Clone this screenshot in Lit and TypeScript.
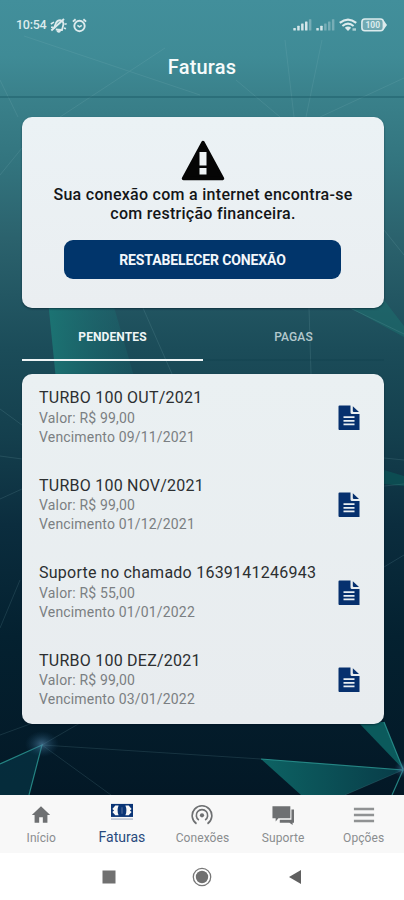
import { LitElement, html, svg, css } from "lit";
import { customElement } from "lit/decorators.js";
import { classMap } from "lit/directives/class-map.js";

interface Invoice {
  title: string;
  value: string;
  due: string;
}

const invoices: Invoice[] = [
  { title: "TURBO 100 OUT/2021", value: "R$ 99,00", due: "09/11/2021" },
  { title: "TURBO 100 NOV/2021", value: "R$ 99,00", due: "01/12/2021" },
  { title: "Suporte no chamado 1639141246943", value: "R$ 55,00", due: "01/01/2022" },
  { title: "TURBO 100 DEZ/2021", value: "R$ 99,00", due: "03/01/2022" },
];

const navItems = [
  {
    label: "Início",
    icon: svg`<path d="M10 20.500v-6h4v6h5v-8.500h3L12 2.500 2 12h3v8.500z" fill="currentColor"/>`,
  },
  {
    label: "Faturas",
    icon: svg`<rect x="0" y="1" width="24" height="14.200" fill="currentColor"/>
      <path d="M1.500 6.500L4.700 2.800H8.300Q6 8.100 8.300 13.400H4.700L1.500 9.700L3.400 8.100zM22.500 6.500L19.300 2.800H15.700Q18 8.100 15.700 13.400H19.300L22.500 9.700L20.600 8.100z" fill="#f8f8f8"/>
      <path d="M12 4.600v7" stroke="#4c6896" stroke-width="1.300"/>
      <rect x="0" y="16.800" width="24" height="1.500" fill="#b2bccd"/>`,
  },
  {
    label: "Conexões",
    icon: svg`<g fill="none" stroke="currentColor" stroke-width="1.800">
      <path d="M6 21.500a10.700 10.700 0 1 1 12 0"/><path d="M8.600 17.500a6.200 6.200 0 1 1 6.800 0"/></g>
      <circle cx="12" cy="12.300" r="2.300" fill="currentColor"/>`,
  },
  {
    label: "Suporte",
    icon: svg`<path d="M0.500 2.500h19.500v13H7l-3 3.500V15.500H0.500zM21.200 6H24v14.500h-1.500V23l-3.500-2.500H8.500V17.200h12.700z" fill="currentColor"/>`,
  },
  {
    label: "Opções",
    icon: svg`<path d="M1 5.500h22M1 12h22M1 18.500h22" stroke="currentColor" stroke-width="2.600" opacity=".75"/>`,
  },
];

@customElement("app-backdrop")
export class AppBackdrop extends LitElement {
  static styles = css`
    :host {
      display: block;
    }
    .art {
      display: block;
      width: 100%;
      height: 100%;
    }
  `;

  render() {
    return html`<svg class="art" viewBox="0 0 404 795" preserveAspectRatio="none">
      <defs>
        <linearGradient id="sky" x1="0" y1="0" x2="0" y2="1">
          <stop offset="0" stop-color="#428f9b" />
          <stop offset="0.07" stop-color="#3f8b96" />
          <stop offset="0.12" stop-color="#3a818b" />
          <stop offset="0.2" stop-color="#33757f" />
          <stop offset="0.3" stop-color="#2b626d" />
          <stop offset="0.44" stop-color="#1b4c59" />
          <stop offset="0.55" stop-color="#143f4d" />
          <stop offset="0.66" stop-color="#0b2d3e" />
          <stop offset="0.8" stop-color="#042130" />
          <stop offset="1" stop-color="#031826" />
        </linearGradient>
        <linearGradient id="shard" x1="0" y1="0" x2="1" y2="0">
          <stop offset="0" stop-color="#1b7775" stop-opacity="0.9" />
          <stop offset="1" stop-color="#1b6a70" stop-opacity="0.25" />
        </linearGradient>
        <linearGradient id="facet" x1="0" y1="0" x2="1" y2="0">
          <stop offset="0" stop-color="#0d6263" />
          <stop offset="1" stop-color="#083c48" />
        </linearGradient>
        <radialGradient id="glow">
          <stop offset="0" stop-color="#5b8fb4" stop-opacity="0.6" />
          <stop offset="1" stop-color="#1a4a6a" stop-opacity="0" />
        </radialGradient>
      </defs>
      <rect width="404" height="795" fill="url(#sky)" />
      <path d="M48 300L56 380H135L112 300z" fill="url(#shard)" />
      <path d="M350 308L384 300L404 326V337z" fill="#1c716f" opacity="0.5" />
      <path d="M384 470L404 476V486L384 484z" fill="#0c5557" opacity="0.7" />
      <path d="M358 722H384L403 769z" fill="#0b5a5c" />
      <path d="M261 759L403 770L345 795H301z" fill="url(#facet)" />
      <path d="M0 764L42 745L29 795H0z" fill="#073544" opacity="0.7" />
      <g fill="none" stroke="#8fc0c6" stroke-width="1" opacity="0.15">
        <path d="M24 36L200 95M60 117L165 48M0 175L22 148M0 80L18 117M404 78L320 117M285 40L294 117M322 40L306 117M236 80L280 117" />
        <path d="M143 308L172 374M309 308L311 374M384 230L404 255M0 409L22 425M0 456L22 459M0 499L22 489" />
        <path d="M350 308L404 334M384 458L404 460M384 486L404 484M384 567L404 555M20 580L0 628M0 735L30 724M42 745L80 723M42 745L261 759M42 745L111 795M345 795L403 770" />
      </g>
      <g fill="none" stroke="#2a9490" stroke-width="1.200" opacity="0.85">
        <path d="M0 764L42 745L29 795M261 759L403 770L392 795M384 722L403 769" />
      </g>
      <ellipse cx="42" cy="744" rx="17" ry="13" fill="url(#glow)" />
      <ellipse cx="403" cy="769" rx="9" ry="9" fill="url(#glow)" />
    </svg>`;
  }
}

@customElement("status-bar")
export class StatusBar extends LitElement {
  static styles = css`
    :host {
      display: flex;
      align-items: center;
      height: 50px;
      padding: 0 17px 0 16px;
      box-sizing: border-box;
      color: #dcebed;
      font: 500 12.500px/16px Roboto, sans-serif;
    }
    .time {
      width: 34px;
      letter-spacing: -0.25px;
    }
    .left {
      display: flex;
      gap: 5px;
      flex: 1;
      align-items: center;
    }
    .right {
      display: flex;
      align-items: center;
    }
    .icon {
      display: block;
    }
    .signal {
      margin-right: 4px;
    }
    .wifi {
      margin-right: 4px;
    }
  `;

  private bars(lit: number) {
    return svg`${[0, 1, 2, 3, 4].map(
      (i) => svg`<rect x=${i * 3.9 + 0.3} y=${9 - i * 2.2} width="2.500" height=${2.6 + i * 2.2}
        rx="0.5" fill="currentColor" opacity=${i < lit ? 0.95 : 0.35} />`,
    )}`;
  }

  render() {
    return html`
      <span class="time">10:54</span>
      <div class="left">
        <svg class="icon" width="17" height="15" viewBox="0 0 17 15" fill="none" stroke="currentColor">
          <path d="M3.800 10.300L6 5Q7.500 2 10.800 2.300Q14.200 3.500 13.200 7.200L12 12L5.800 11.500M7.200 12.800Q8.500 14.600 10.300 13" stroke-width="1.800" />
          <path d="M1.300 12.500L14 1" stroke-width="2" />
          <path d="M0.800 6L4 4.200M14.500 6.300L16.700 5.800M14 10L16 10.800M1 9.200H3" stroke-width="1.500" />
        </svg>
        <svg class="icon" width="15" height="15" viewBox="0 0 15 15" fill="none" stroke="currentColor">
          <circle cx="7.500" cy="8" r="5.200" stroke-width="1.900" />
          <path d="M0.900 3.600L3.600 1.300M14.100 3.600L11.400 1.300" stroke-width="1.900" />
          <path d="M5.400 7.300L7.500 8.800L9.800 7.300" stroke-width="1.600" />
        </svg>
      </div>
      <div class="right">
        <svg class="icon signal" width="19" height="12" viewBox="0 0 19 12">${this.bars(4)}</svg>
        <svg class="icon signal" width="19" height="12" viewBox="0 0 19 12">${this.bars(2)}</svg>
        <svg class="icon wifi" width="18" height="14" viewBox="0 0 18 14" fill="none" stroke="currentColor">
          <path d="M0.800 4.900Q9 -1.800 17.200 4.900" stroke-width="2.200" />
          <path d="M3.400 8Q9 3.300 14.600 8" stroke-width="2" />
          <path d="M5.800 9.800Q9 7.200 12.200 9.800L9 13z" fill="currentColor" stroke="none" />
          <path d="M13.500 11.500H17" stroke-width="2.400" opacity="0.7" />
        </svg>
        <svg class="icon" width="26" height="14" viewBox="0 0 26 14">
          <rect x="0.900" y="1" width="21.500" height="11.800" rx="3" fill="#ffffff" fill-opacity="0.25" stroke="currentColor" stroke-width="1.600" />
          <path d="M22.800 2.500L26 7L22.800 11.500z" fill="currentColor" />
          <text x="11.800" y="10.200" text-anchor="middle" font-family="Roboto, sans-serif" font-size="8.500" font-weight="700" fill="currentColor">100</text>
        </svg>
      </div>
    `;
  }
}

@customElement("invoice-row")
export class InvoiceRow extends LitElement {
  static properties = { invoice: { attribute: false } };
  declare invoice: Invoice;

  static styles = css`
    :host {
      display: flex;
      align-items: flex-start;
      justify-content: space-between;
      box-sizing: border-box;
      height: 87.500px;
      padding: 13px 24px 0 17px;
      font-family: Roboto, sans-serif;
    }
    .title {
      color: #2c2f31;
      font-size: 16px;
      line-height: 21px;
      letter-spacing: 0.24px;
      white-space: nowrap;
      margin-bottom: 0.600px;
    }
    .detail {
      color: #7b7f82;
      font-size: 14px;
      line-height: 19px;
      letter-spacing: 0.17px;
    }
    .doc {
      display: block;
      margin-top: 17.500px;
    }
  `;

  render() {
    return html`
      <div>
        <div class="title">${this.invoice.title}</div>
        <div class="detail">Valor: ${this.invoice.value}</div>
        <div class="detail">Vencimento ${this.invoice.due}</div>
      </div>
      <svg class="doc" width="22" height="26" viewBox="0 0 22 26">
        <path d="M1.500 0.500H12.500V7.500Q12.500 9 14 9H21.500V25H1.500Q0.500 25 0.500 24V1.500Q0.500 0.500 1.500 0.500z" fill="#06306e" />
        <path d="M14.800 1.200L21 6.900H15.600Q14.800 6.900 14.800 6.100z" fill="#06306e" />
        <path d="M5.500 12.200H16.500M5.500 15.800H16.500M5.500 19.400H16.500" stroke="#e9eef2" stroke-width="1.700" />
      </svg>
    `;
  }
}

@customElement("app-root")
export class AppRoot extends LitElement {
  static styles = css`
    :host {
      display: block;
      position: relative;
      width: 404px;
      height: 900px;
      overflow: hidden;
      background: #ffffff;
      font-family: Roboto, sans-serif;
    }
    .backdrop {
      position: absolute;
      inset: 0 0 105px 0;
    }
    .screen {
      position: relative;
      display: flex;
      flex-direction: column;
      height: 100%;
    }
    .header {
      height: 98px;
      box-sizing: border-box;
      border-bottom: 2px solid rgba(22, 84, 98, 0.4);
    }
    .heading {
      margin: 0;
      padding-top: 4px;
      color: #f6fbfb;
      font-size: 20px;
      line-height: 26px;
      font-weight: 500;
      text-align: center;
      letter-spacing: 0.2px;
    }
    .content {
      flex: 1;
      padding: 19px 20px 0 22px;
    }
    .card {
      border-radius: 10px;
      background: linear-gradient(#ebf2f5, #eaeef1);
      box-shadow: 0 1px 2px rgba(0, 20, 35, 0.55);
    }
    .alert {
      display: flex;
      flex-direction: column;
      align-items: center;
      height: 190.500px;
      padding-top: 23px;
      box-sizing: border-box;
    }
    .message {
      margin: 4px 0 0;
      color: #141618;
      font-size: 16px;
      line-height: 19px;
      font-weight: 500;
      letter-spacing: 0.28px;
      text-align: center;
      white-space: nowrap;
    }
    .reconnect {
      width: 277px;
      height: 39px;
      margin: 17px 1px 0 0;
      padding: 0;
      border: 0;
      border-radius: 9px;
      background: #01356b;
      color: #f3f7fb;
      font: 700 14px/38px Roboto, sans-serif;
      letter-spacing: -0.12px;
    }
    .tabs {
      display: grid;
      grid-template-columns: 1fr 1fr;
      height: 53.500px;
      margin-bottom: 13px;
    }
    .tab {
      box-sizing: border-box;
      padding-top: 20.500px;
      border-bottom: 2px solid rgba(10, 60, 72, 0.25);
      color: #b4c9cd;
      font-size: 12px;
      line-height: 18px;
      font-weight: 500;
      letter-spacing: 0.1px;
      text-align: center;
    }
    .tab.active {
      border-bottom-color: #eef4f5;
      color: #eff6f7;
      font-weight: 700;
    }
    .list {
      height: 349.500px;
      background: linear-gradient(#eaf0f2, #e8ecef);
      overflow: hidden;
    }
    .nav {
      display: grid;
      grid-template-columns: repeat(5, 1fr);
      height: 58px;
      padding-left: 1px;
      box-sizing: border-box;
      background: #f8f8f8;
      color: #707274;
    }
    .item {
      display: flex;
      flex-direction: column;
      align-items: center;
      padding-top: 8.500px;
      gap: 3px;
      color: #6e7072;
      font-size: 12px;
      line-height: 18px;
      letter-spacing: 0.1px;
    }
    .item .label {
      color: #8a8d8f;
    }
    .item.active {
      padding-top: 8px;
      color: #0a3577;
      font-size: 14px;
      letter-spacing: 0;
    }
    .item.active .label {
      color: #284a7d;
    }
    .glyph {
      display: block;
    }
    .system {
      display: grid;
      grid-template-columns: 1fr 1fr 1fr;
      height: 47px;
      padding: 0 62px;
      box-sizing: border-box;
      justify-items: center;
      align-items: center;
    }
  `;

  render() {
    return html`
      <app-backdrop class="backdrop"></app-backdrop>
      <div class="screen">
        <header class="header">
          <status-bar></status-bar>
          <h1 class="heading">Faturas</h1>
        </header>
        <main class="content">
          <section class="card alert">
            <svg class="glyph" width="44" height="41" viewBox="0 0 44 41">
              <path d="M22 2.500L41.500 38.500H2.500z" fill="#050505" stroke="#050505" stroke-width="3.500" stroke-linejoin="round" />
              <path d="M18.500 12H25.500V25.500H18.500zM18.500 28H25.500V34.500H18.500z" fill="#eef3f5" />
            </svg>
            <p class="message">Sua conexão com a internet encontra-se<br />com restrição financeira.</p>
            <button class="reconnect">RESTABELECER CONEXÃO</button>
          </section>
          <div class="tabs">
            <div class="tab active">PENDENTES</div>
            <div class="tab">PAGAS</div>
          </div>
          <section class="card list">
            ${invoices.map((invoice) => html`<invoice-row .invoice=${invoice}></invoice-row>`)}
          </section>
        </main>
        <nav class="nav">
          ${navItems.map(
            (item) => html`<div class=${classMap({ item: true, active: item.label === "Faturas" })}>
              <svg class="glyph" width="22" height="22" viewBox="0 0 24 24">${item.icon}</svg>
              <span class="label">${item.label}</span>
            </div>`,
          )}
        </nav>
        <footer class="system">
          <svg class="glyph" width="14" height="14" viewBox="0 0 14 14">
            <rect x="0.500" y="0.500" width="13" height="13" fill="#707070" />
          </svg>
          <svg class="glyph" width="20" height="20" viewBox="0 0 20 20">
            <circle cx="10" cy="10" r="8.700" fill="none" stroke="#777777" stroke-width="1.300" />
            <circle cx="10" cy="10" r="6.200" fill="#707070" />
          </svg>
          <svg class="glyph" width="14" height="16" viewBox="0 0 14 16">
            <path d="M13 1V15L1 8z" fill="#606060" />
          </svg>
        </footer>
      </div>
    `;
  }
}
